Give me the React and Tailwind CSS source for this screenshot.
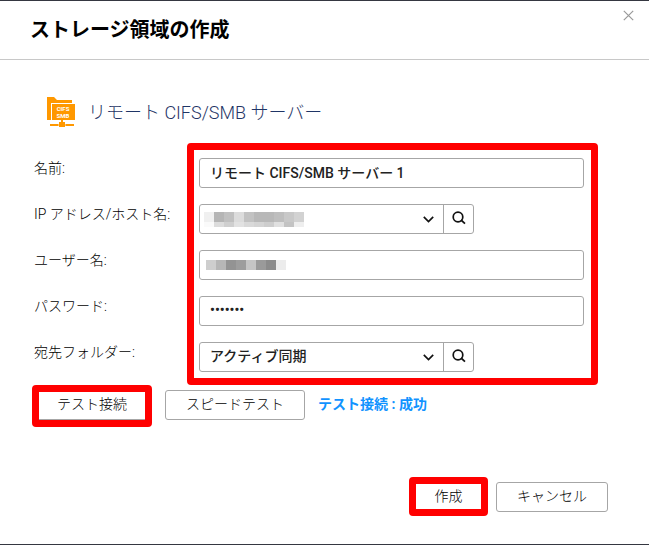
const FONT = "font-[Roboto,'Noto_Sans_CJK_JP',sans-serif]";

const labels = [
  { id: "name", text: "名前:" },
  { id: "host", text: "IP アドレス/ホスト名:" },
  { id: "user", text: "ユーザー名:" },
  { id: "password", text: "パスワード:" },
  { id: "folder", text: "宛先フォルダー:" },
];

const hostMask = [
  ["#f0f0f0", "#b5b5b5", "#c0c0c0", "#dcdcdc", "#c2c2c2", "#b8b8b8", "#b8b8b8", "#bebebe", "#c8c8c8", "#d2d2d2"],
  ["#fafafa", "#dcdcdc", "#cfcfcf", "#e2e2e2", "#d9d9d9", "#d4d4d4", "#cdcdcd", "#e0e0e0", "#c3c3c3", "#eeeeee"],
];
const userMask = ["#cecece", "#b6b6b6", "#939393", "#9d9d9d", "#c5c5c5", "#9a9a9a", "#8b8b8b", "#ececec"];

const inputClass =
  "block h-[30px] w-full rounded-[3px] border border-[#a6a6a6] bg-white px-2.5 pb-0.5 text-sm font-medium text-[#222]";
const buttonClass =
  "h-[30px] rounded-[3px] border border-[#a6a6a6] bg-white pb-0.5 text-sm font-light text-black";

const ServerIcon = () => (
  <svg width="29" height="31" viewBox="0 0 29 31" aria-hidden="true">
    <path d="M0 0h7l3 3h15v3H4v17H0z" fill="#ff9800" />
    <path d="M5 7h23v16H5z" fill="#ff9800" />
    <path d="M14 23h2v2h-2zM3 27h8v2H3zM19 27h8v2h-8zM12 25h6v5h-6z" fill="#ff9800" />
    <path d="M11 28h1M18 28h1" stroke="#ffc266" strokeWidth="2" />
    <text x="16" y="14" textAnchor="middle" fontSize="6" fontWeight="700" fill="#fff">
      CIFS
    </text>
    <text x="16" y="21" textAnchor="middle" fontSize="6" fontWeight="700" fill="#fff">
      SMB
    </text>
  </svg>
);

const SearchIcon = () => (
  <svg width="14" height="14" viewBox="0 0 14 14" fill="none" stroke="#111" strokeWidth="1.7" aria-hidden="true">
    <circle cx="6" cy="6" r="4.8" />
    <path d="M9 9l4 3.600" />
  </svg>
);

const Chevron = () => (
  <svg
    className="pointer-events-none absolute top-[11px] right-[9px]"
    width="11"
    height="7"
    viewBox="0 0 11 7"
    fill="none"
    stroke="#111"
    strokeWidth="1.7"
    aria-hidden="true"
  >
    <path d="M.8.9l4.700 4.600L10.200.9" />
  </svg>
);

const SelectField = ({ id, options, searchLabel, children }) => (
  <div className="flex h-[30px] w-[275px] max-w-full rounded-[3px] border border-[#a6a6a6]">
    <div className="relative flex-1">
      <select id={id} className="h-full w-full appearance-none bg-transparent px-2.5 pb-0.5 text-sm font-medium text-[#222]">
        {options.map((option) => (
          <option key={option}>{option}</option>
        ))}
      </select>
      {children}
      <Chevron />
    </div>
    <button
      type="button"
      aria-label={searchLabel}
      className="flex w-[30px] items-center justify-center border-l border-[#a6a6a6] pb-0.5"
    >
      <SearchIcon />
    </button>
  </div>
);

const App = () => {
  return (
    <div className={`border-t border-b border-[#353741] bg-white text-black ${FONT}`}>
      <header className="flex h-[59px] items-start justify-between border-b border-[#c8c8c8] pr-[15px] pl-[30px]">
        <h1 className="pt-[15px] text-xl leading-7 font-bold text-black">ストレージ領域の作成</h1>
        <button type="button" aria-label="閉じる" className="pt-[9px]">
          <svg width="11" height="11" viewBox="0 0 11 11" fill="none" stroke="#999" strokeWidth="1.2">
            <path d="M.8.8l9.400 9.400M10.200.8L.8 10.200" />
          </svg>
        </button>
      </header>

      <form className="pt-9 pb-7" onSubmit={(e) => e.preventDefault()}>
        <div className="mb-3.5 flex items-center gap-3 pl-[47px]">
          <ServerIcon />
          <h2 className="text-lg leading-[33px] font-light text-[#1f3566]">リモート CIFS/SMB サーバー</h2>
        </div>

        <div className="flex pr-[51px] pl-[34px]">
          <div className="flex w-[153px] shrink-0 flex-col gap-4 pt-2.5">
            {labels.map((label) => (
              <label key={label.id} htmlFor={label.id} className="block h-[30px] text-sm leading-[30px] font-light whitespace-nowrap">
                {label.text}
              </label>
            ))}
          </div>

          <div className="flex flex-1 flex-col gap-4 rounded border-[7px] border-[#f00] pt-2 pr-[7px] pb-1.5 pl-[5px]">
            <input id="name" type="text" defaultValue="リモート CIFS/SMB サーバー 1" className={inputClass} />
            <SelectField id="host" options={[""]} searchLabel="ホストを検索">
              <div className="pointer-events-none absolute top-[7px] left-1">
                <div className="flex">
                  {hostMask[0].map((color, i) => (
                    <div key={i} className="h-2.5 w-2.5" style={{ background: color }} />
                  ))}
                </div>
                <div className="flex">
                  {hostMask[1].map((color, i) => (
                    <div key={i} className="h-[5px] w-2.5" style={{ background: color }} />
                  ))}
                </div>
              </div>
            </SelectField>
            <div className="relative">
              <input id="user" type="text" className={inputClass} />
              <div className="pointer-events-none absolute top-2.5 left-[7px] flex">
                {userMask.map((color, i) => (
                  <div key={i} className="h-2.5 w-2.5" style={{ background: color }} />
                ))}
              </div>
            </div>
            <input id="password" type="password" defaultValue="1234567" className={inputClass} />
            <SelectField id="folder" options={["アクティブ同期"]} searchLabel="フォルダーを検索" />
          </div>
        </div>

        <div className="flex items-center pl-8">
          <button
            type="button"
            className="h-[42px] w-[120px] rounded border-[7px] border-[#f00] bg-white pb-1 text-sm font-light shadow-[inset_0_-1px_0_#a6a6a6]"
          >
            テスト接続
          </button>
          <div className="flex items-center pb-0.5 pl-[13px]">
            <button type="button" className={`${buttonClass} w-[140px]`}>
              スピードテスト
            </button>
            <p className="ml-[13px] pb-0.5 text-sm font-bold text-[#1193ff]">テスト接続 : 成功</p>
          </div>
        </div>

        <div className="mt-[50px] flex items-center justify-end gap-2 pr-[41px]">
          <button
            type="submit"
            className="h-[39px] w-[79px] rounded border-[7px] border-[#f00] bg-white pb-0.5 text-sm font-light"
          >
            作成
          </button>
          <button type="button" className={`${buttonClass} w-28`}>
            キャンセル
          </button>
        </div>
      </form>
    </div>
  );
};

export default App;
